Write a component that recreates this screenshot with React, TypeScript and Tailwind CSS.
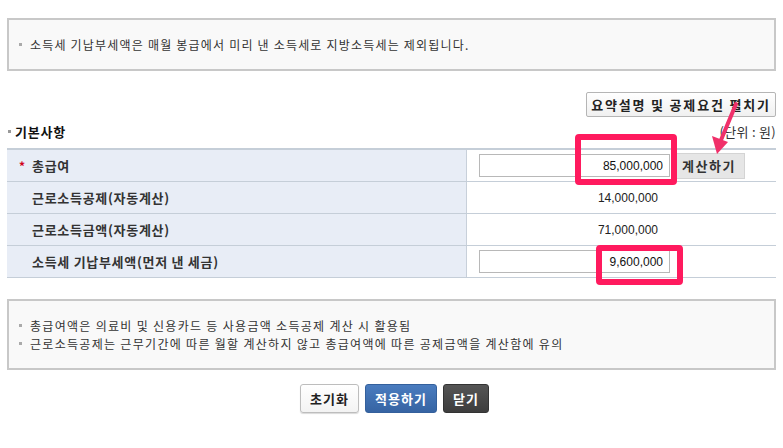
import React from "react";

const KR = { fontFamily: '"Noto Sans CJK KR", "Noto Sans", sans-serif' };
const NUM = { fontFamily: '"Liberation Sans", sans-serif' };

function Bullet() {
  return <span className="inline-block w-[3px] h-[3px] bg-[#aaaaaa] mr-[8px] align-middle" />;
}

function LabelCell({ children, star }: { children: React.ReactNode; star?: boolean }) {
  return (
    <div className="h-[31px] bg-[#e8edf6] border-r border-[#c8d0da] flex items-center pl-[12px] text-[13px] font-bold text-[#333] tracking-[0.7px]">
      {star ? <span className="text-[#d0021b] w-[13px] text-[12px]">*</span> : <span className="w-[13px]" />}
      {children}
    </div>
  );
}

export default function App() {
  const rows = [
    { label: "근로소득공제(자동계산)", value: "14,000,000" },
    { label: "근로소득금액(자동계산)", value: "71,000,000" },
  ];

  return (
    <div className="relative w-[783px] h-[448px] bg-white px-[7px] pt-[18px] text-[#333]" style={KR}>
      <div className="h-[53px] bg-[#f9f9f9] border-2 border-[#c8c8c8] flex items-center pl-[10px] text-[12px] tracking-[1.2px]">
        <Bullet />
        소득세 기납부세액은 매월 봉급에서 미리 낸 소득세로 지방소득세는 제외됩니다.
      </div>

      <div className="flex justify-end mt-[21px]">
        <button className="h-[25px] w-[190px] border border-[#b5b5b5] bg-gradient-to-b from-white to-[#f0f0f0] text-[13px] font-bold text-[#222] tracking-[1.8px] rounded-[2px]">
          요약설명 및 공제요건 펼치기
        </button>
      </div>

      <div className="flex justify-between items-center h-[31px] pb-[2px]">
        <div className="flex items-center text-[13px] font-bold text-[#111] tracking-[0.8px]">
          <span className="inline-block w-[3px] h-[3px] bg-[#999] mr-[4px] ml-[1px]" />
          기본사항
        </div>
        <div className="text-[13px] text-[#333] tracking-[0.3px]">(단위 : 원)</div>
      </div>

      <div className="border-t-2 border-[#c5ced8]">
        <div className="grid grid-cols-[460px_1fr] border-b border-[#c5ced8]">
          <LabelCell star>총급여</LabelCell>
          <div className="h-[31px] flex items-center pl-[12px] gap-[3px]">
            <input
              readOnly
              value="85,000,000"
              className="w-[191px] h-[23px] border border-[#b8b8b8] text-right pr-[6px] text-[12px] text-[#111] outline-none"
              style={NUM}
            />
            <button className="w-[72px] h-[26px] bg-[#e6e6e6] border border-[#d4d4d4] text-[13px] font-bold text-[#333] tracking-[1.5px]">
              계산하기
            </button>
          </div>
        </div>
        {rows.map((r) => (
          <div key={r.label} className="grid grid-cols-[460px_1fr] border-b border-[#c5ced8]">
            <LabelCell>{r.label}</LabelCell>
            <div className="h-[31px] flex items-center">
              <div className="ml-[12px] w-[191px] text-right pr-[12px] text-[12px] text-[#222]" style={NUM}>
                {r.value}
              </div>
            </div>
          </div>
        ))}
        <div className="grid grid-cols-[460px_1fr] border-b border-[#c5ced8]">
          <LabelCell>소득세 기납부세액(먼저 낸 세금)</LabelCell>
          <div className="h-[31px] flex items-center pl-[12px]">
            <input
              readOnly
              value="9,600,000"
              className="w-[191px] h-[23px] border border-[#b8b8b8] text-right pr-[6px] text-[12px] text-[#111] outline-none"
              style={NUM}
            />
          </div>
        </div>
      </div>

      <div className="mt-[21px] h-[71px] bg-[#f9f9f9] border-2 border-[#c8c8c8] flex flex-col justify-center pl-[10px] text-[12px] tracking-[1.3px] gap-[1px]">
        <div className="flex items-center h-[17px]">
          <Bullet />
          총급여액은 의료비 및 신용카드 등 사용금액 소득공제 계산 시 활용됨
        </div>
        <div className="flex items-center h-[17px]">
          <Bullet />
          근로소득공제는 근무기간에 따른 월할 계산하지 않고 총급여액에 따른 공제금액을 계산함에 유의
        </div>
      </div>

      <div className="flex justify-center gap-[6px] mt-[14px] pl-[6px]">
        <button className="w-[59px] h-[29px] bg-gradient-to-b from-white to-[#f3f3f3] border border-[#bdbdbd] rounded-[3px] shadow-[0_1px_1px_rgba(0,0,0,0.15)] text-[13px] font-bold text-[#222] tracking-[1px]">
          초기화
        </button>
        <button className="w-[72px] h-[29px] bg-gradient-to-b from-[#4a7cbf] to-[#3664a3] border border-[#34609c] rounded-[3px] text-[13px] font-bold text-white tracking-[1px]">
          적용하기
        </button>
        <button className="w-[46px] h-[29px] bg-gradient-to-b from-[#555] to-[#3d3d3d] border border-[#333] rounded-[3px] text-[13px] font-bold text-white tracking-[1px]">
          닫기
        </button>
      </div>

      {/* highlight overlays */}
      <div className="absolute left-[575px] top-[134px] w-[102px] h-[51px] border-[6px] border-[#ff1a5e] rounded-[4px] pointer-events-none" />
      <div className="absolute left-[596px] top-[245px] w-[87px] h-[40px] border-[6px] border-[#ff1a5e] rounded-[4px] pointer-events-none" />
      <svg className="absolute left-[700px] top-[100px] pointer-events-none" width="50" height="56" viewBox="0 0 50 56">
        <line x1="36" y1="4" x2="21" y2="40" stroke="#f0306a" strokeWidth="4" strokeLinecap="round" />
        <polygon points="12,36 28,42 17,54" fill="#f0306a" />
      </svg>
    </div>
  );
}
